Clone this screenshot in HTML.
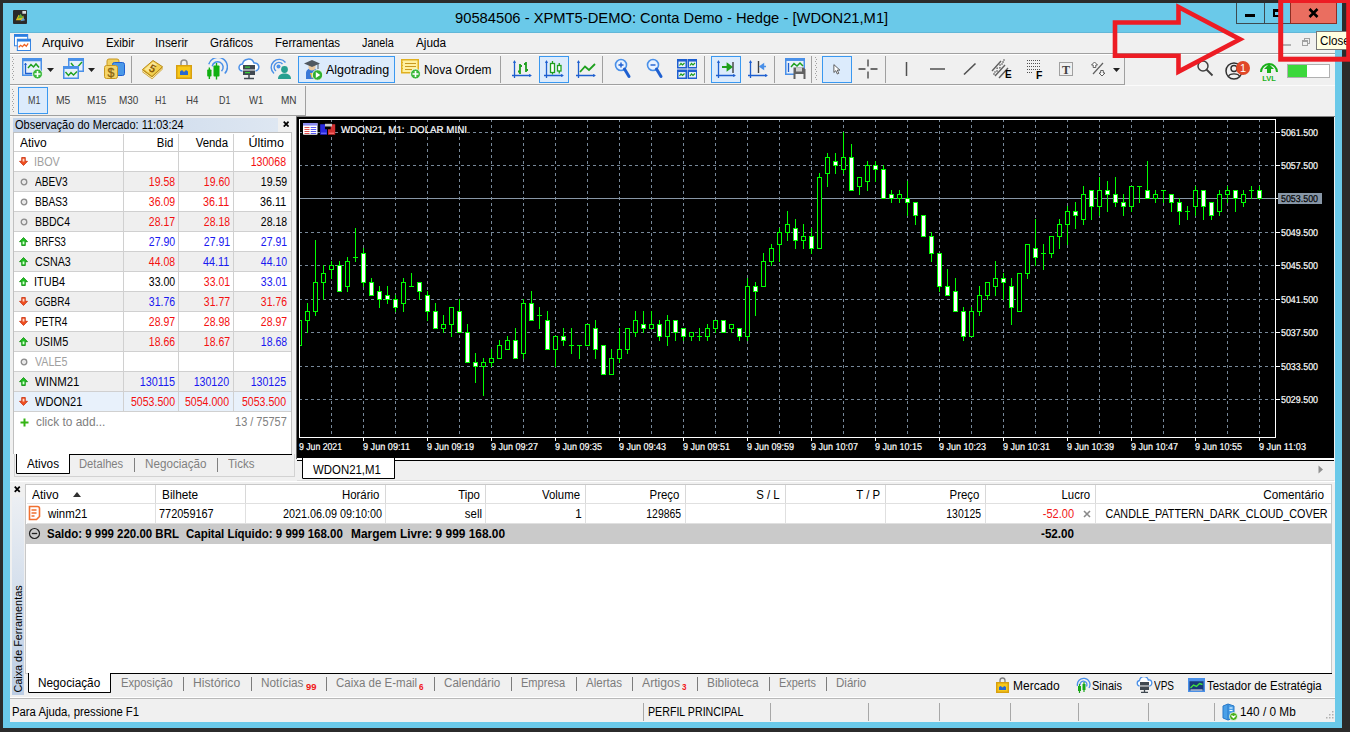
<!DOCTYPE html>
<html lang="pt"><head><meta charset="utf-8"><title>MetaTrader 5</title>
<style>
html,body{margin:0;padding:0}
body{width:1350px;height:732px;overflow:hidden;background:#2b2b2b;position:relative;font-family:"Liberation Sans",Arial,sans-serif;font-size:12px}
#root{position:absolute;left:0;top:0;width:1350px;height:732px;overflow:hidden}
</style></head><body><div id="root">
<div style="position:absolute;left:3px;top:3px;width:1339px;height:725px;background:#6ac9e9;"></div>
<svg width="14" height="14" viewBox="0 0 15 15" style="position:absolute;left:13px;top:10px;"><rect width="15" height="15" rx="1" fill="#2a2a2a"/><path d="M3 11l3-6 3 3 2-2 1 5z" fill="#d8c020"/><path d="M5 9l3-5 3 4z" fill="#58a838"/><path d="M8 12l3-4 2 3z" fill="#5a9ad8"/><rect x="10" y="1" width="4" height="3" fill="#ddd"/></svg>
<span id="t1" style="position:absolute;top:8.0px;line-height:19px;font-size:15px;color:#000;white-space:pre;left:455.00px;transform-origin:0 50%;transform:scaleX(0.9823);">90584506 - XPMT5-DEMO: Conta Demo - Hedge - [WDON21,M1]</span>
<div style="position:absolute;left:1236px;top:3px;width:28.5px;height:21px;border:1px solid #3c4a50;border-top:none;box-sizing:border-box;"></div>
<div style="position:absolute;left:1264px;top:3px;width:27px;height:21px;border:1px solid #3c4a50;border-top:none;border-left:none;box-sizing:border-box;"></div>
<div style="position:absolute;left:1290px;top:3px;width:47px;height:21px;background:#ea6e60;border:1px solid #8c2e24;border-top:none;box-sizing:border-box;"></div>
<div style="position:absolute;left:1245px;top:14px;width:10px;height:3px;background:#000;"></div>
<div style="position:absolute;left:1273px;top:9px;width:9px;height:8px;border:2px solid #000;border-top-width:3px;box-sizing:border-box;"></div>
<svg width="11" height="10" viewBox="0 0 11 10" style="position:absolute;left:1308px;top:8px;"><path d="M1.5 1l8 8M9.5 1l-8 8" stroke="#000" stroke-width="2.6"/></svg>
<div style="position:absolute;left:10px;top:32px;width:1325px;height:1px;background:#62b7d8;"></div>
<div style="position:absolute;left:10px;top:33px;width:1325px;height:689px;background:#f0f0f0;"></div>
<div style="position:absolute;left:10px;top:53px;width:1325px;height:1px;background:#a0a0a0;"></div>
<div style="position:absolute;left:10px;top:54px;width:1325px;height:1px;background:#fff;"></div>
<svg width="17" height="17" viewBox="0 0 18 18" style="position:absolute;left:14px;top:34px;"><rect x="0.5" y="0.5" width="14" height="12" fill="#fff" stroke="#2b7de0"/><rect x="0.5" y="0.5" width="14" height="2.5" fill="#2b7de0"/><rect x="3.5" y="5.5" width="14" height="12" fill="#fff" stroke="#2b7de0"/><rect x="3.5" y="5.5" width="14" height="2.5" fill="#2b7de0"/><path d="M5 14l2-2 2 1.5 2-2.5 2 2 2-3" stroke="#f06020" stroke-width="1.3" fill="none"/></svg>
<span id="t2" style="position:absolute;top:35.0px;line-height:16px;font-size:12px;color:#000;white-space:pre;left:42.00px;transform-origin:0 50%;transform:scaleX(1.0240);">Arquivo</span>
<span id="t3" style="position:absolute;top:35.0px;line-height:16px;font-size:12px;color:#000;white-space:pre;left:106.00px;transform-origin:0 50%;transform:scaleX(0.9497);">Exibir</span>
<span id="t4" style="position:absolute;top:35.0px;line-height:16px;font-size:12px;color:#000;white-space:pre;left:155.01px;transform-origin:0 50%;transform:scaleX(0.9894);">Inserir</span>
<span id="t5" style="position:absolute;top:35.0px;line-height:16px;font-size:12px;color:#000;white-space:pre;left:210.00px;transform-origin:0 50%;transform:scaleX(0.9624);">Gráficos</span>
<span id="t6" style="position:absolute;top:35.0px;line-height:16px;font-size:12px;color:#000;white-space:pre;left:275.00px;transform-origin:0 50%;transform:scaleX(0.9556);">Ferramentas</span>
<span id="t7" style="position:absolute;top:35.0px;line-height:16px;font-size:12px;color:#000;white-space:pre;left:362.00px;transform-origin:0 50%;transform:scaleX(0.8967);">Janela</span>
<span id="t8" style="position:absolute;top:35.0px;line-height:16px;font-size:12px;color:#000;white-space:pre;left:416.00px;transform-origin:0 50%;transform:scaleX(0.9833);">Ajuda</span>
<div style="position:absolute;left:1283px;top:43.7px;width:8px;height:2px;background:#b0b0b0;"></div>
<svg width="10" height="10" viewBox="0 0 10 10" style="position:absolute;left:1301px;top:37px;"><rect x="3.5" y="1.5" width="5" height="5" fill="none" stroke="#a0a0a0"/><rect x="1.5" y="3.5" width="5" height="5" fill="#f0f0f0" stroke="#a0a0a0"/><rect x="1.5" y="3.5" width="5" height="1.5" fill="#a0a0a0"/></svg>
<div style="position:absolute;left:10px;top:84px;width:1115px;height:1px;background:#a0a0a0;"></div>
<div style="position:absolute;left:10px;top:85px;width:1325px;height:1px;background:#fbfbfb;"></div>
<div style="position:absolute;left:1124px;top:54px;width:1px;height:31px;background:#a0a0a0;"></div>
<div style="position:absolute;left:10px;top:115px;width:296px;height:1px;background:#a0a0a0;"></div>
<div style="position:absolute;left:10px;top:116px;width:2px;height:1px;background:#fff;"></div>
<div style="position:absolute;left:305px;top:86px;width:1px;height:30px;background:#a0a0a0;"></div>
<svg width="3" height="24" viewBox="0 0 3 24" style="position:absolute;left:12px;top:57px;"><rect x="0" y="0" width="1" height="1" fill="#a0a0a0"/><rect x="1" y="2" width="1" height="1" fill="#a0a0a0"/><rect x="0" y="4" width="1" height="1" fill="#a0a0a0"/><rect x="1" y="6" width="1" height="1" fill="#a0a0a0"/><rect x="0" y="8" width="1" height="1" fill="#a0a0a0"/><rect x="1" y="10" width="1" height="1" fill="#a0a0a0"/><rect x="0" y="12" width="1" height="1" fill="#a0a0a0"/><rect x="1" y="14" width="1" height="1" fill="#a0a0a0"/><rect x="0" y="16" width="1" height="1" fill="#a0a0a0"/><rect x="1" y="18" width="1" height="1" fill="#a0a0a0"/><rect x="0" y="20" width="1" height="1" fill="#a0a0a0"/><rect x="1" y="22" width="1" height="1" fill="#a0a0a0"/></svg>
<svg width="3" height="24" viewBox="0 0 3 24" style="position:absolute;left:12px;top:89px;"><rect x="0" y="0" width="1" height="1" fill="#a0a0a0"/><rect x="1" y="2" width="1" height="1" fill="#a0a0a0"/><rect x="0" y="4" width="1" height="1" fill="#a0a0a0"/><rect x="1" y="6" width="1" height="1" fill="#a0a0a0"/><rect x="0" y="8" width="1" height="1" fill="#a0a0a0"/><rect x="1" y="10" width="1" height="1" fill="#a0a0a0"/><rect x="0" y="12" width="1" height="1" fill="#a0a0a0"/><rect x="1" y="14" width="1" height="1" fill="#a0a0a0"/><rect x="0" y="16" width="1" height="1" fill="#a0a0a0"/><rect x="1" y="18" width="1" height="1" fill="#a0a0a0"/><rect x="0" y="20" width="1" height="1" fill="#a0a0a0"/><rect x="1" y="22" width="1" height="1" fill="#a0a0a0"/></svg>
<svg width="3" height="24" viewBox="0 0 3 24" style="position:absolute;left:815px;top:57px;"><rect x="0" y="0" width="1" height="1" fill="#a0a0a0"/><rect x="1" y="2" width="1" height="1" fill="#a0a0a0"/><rect x="0" y="4" width="1" height="1" fill="#a0a0a0"/><rect x="1" y="6" width="1" height="1" fill="#a0a0a0"/><rect x="0" y="8" width="1" height="1" fill="#a0a0a0"/><rect x="1" y="10" width="1" height="1" fill="#a0a0a0"/><rect x="0" y="12" width="1" height="1" fill="#a0a0a0"/><rect x="1" y="14" width="1" height="1" fill="#a0a0a0"/><rect x="0" y="16" width="1" height="1" fill="#a0a0a0"/><rect x="1" y="18" width="1" height="1" fill="#a0a0a0"/><rect x="0" y="20" width="1" height="1" fill="#a0a0a0"/><rect x="1" y="22" width="1" height="1" fill="#a0a0a0"/></svg>
<div style="position:absolute;left:298px;top:56px;width:97px;height:27px;background:#dcebfc;border:1px solid #3a98f0;box-sizing:border-box;"></div>
<div style="position:absolute;left:539px;top:56px;width:30px;height:27px;background:#dcebfc;border:1px solid #3a98f0;box-sizing:border-box;"></div>
<div style="position:absolute;left:711px;top:56px;width:30px;height:27px;background:#dcebfc;border:1px solid #3a98f0;box-sizing:border-box;"></div>
<div style="position:absolute;left:822px;top:56px;width:30px;height:27px;background:#dcebfc;border:1px solid #3a98f0;box-sizing:border-box;"></div>
<div style="position:absolute;left:18.4px;top:87.3px;width:29.5px;height:26.6px;background:#dcebfc;border:1px solid #3a98f0;box-sizing:border-box;"></div>
<div style="position:absolute;left:131px;top:56px;width:1px;height:27px;background:#a0a0a0;"></div>
<div style="position:absolute;left:500px;top:56px;width:1px;height:27px;background:#a0a0a0;"></div>
<div style="position:absolute;left:602px;top:56px;width:1px;height:27px;background:#a0a0a0;"></div>
<div style="position:absolute;left:704px;top:56px;width:1px;height:27px;background:#a0a0a0;"></div>
<div style="position:absolute;left:774px;top:56px;width:1px;height:27px;background:#a0a0a0;"></div>
<div style="position:absolute;left:811px;top:56px;width:1px;height:27px;background:#a0a0a0;"></div>
<div style="position:absolute;left:885px;top:56px;width:1px;height:27px;background:#a0a0a0;"></div>
<svg width="22" height="22" viewBox="0 0 22 22" style="position:absolute;left:22px;top:58px;"><rect x="0.75" y="0.75" width="18.5" height="16.5" fill="#e8f0fa" stroke="#4a90e8" stroke-width="1.5"/><rect x="0.75" y="0.75" width="18.5" height="2.5" fill="#4a90e8"/><path d="M3.5 5v10.5h9" stroke="#1e5fd0" stroke-width="1.3" fill="none"/><path d="M2 7l1.5-2 1.5 2z" fill="#1e5fd0"/><path d="M6 10l3-3.5 2.5 2.5 2.5-3 3 3.5" stroke="#1ea01e" stroke-width="1.5" fill="none"/><circle cx="15.5" cy="16" r="5" fill="#3cb83c" stroke="#fff" stroke-width="0.8"/><path d="M15.5 13v6M12.5 16h6" stroke="#fff" stroke-width="1.6"/></svg>
<svg width="22" height="22" viewBox="0 0 22 22" style="position:absolute;left:63px;top:58px;"><rect x="5.75" y="0.75" width="14.5" height="12.5" fill="#e8f0fa" stroke="#4a90e8" stroke-width="1.5"/><rect x="5.75" y="0.75" width="14.5" height="2.2" fill="#4a90e8"/><path d="M8 5l4 5 3.5-2 3.5-4" stroke="#1ea01e" stroke-width="1.4" fill="none"/><rect x="0.75" y="8.75" width="14.5" height="11.5" fill="#e8f0fa" stroke="#4a90e8" stroke-width="1.5"/><rect x="0.75" y="8.75" width="14.5" height="2.2" fill="#4a90e8"/><path d="M2.5 14l3 3.5 2.5-3 2.5 2.5 3.5-3.5" stroke="#1ea01e" stroke-width="1.4" fill="none"/></svg>
<svg width="22" height="22" viewBox="0 0 22 22" style="position:absolute;left:104px;top:58px;"><rect x="3" y="1" width="12" height="12" rx="2" fill="#f0d060" stroke="#c89820"/><rect x="8.5" y="4.5" width="12" height="13" rx="2" fill="#4a98e8" stroke="#1e5fd0"/><rect x="0.5" y="7.5" width="13" height="13" rx="2" fill="#f4d468" stroke="#c89820"/><text x="7" y="18.800" font-family="Liberation Sans,Arial,sans-serif" font-size="12.5" text-anchor="middle" fill="#8a6410" stroke="#8a6410" stroke-width="0.3">$</text></svg>
<svg width="22" height="22" viewBox="0 0 22 22" style="position:absolute;left:141px;top:58px;"><path d="M1.500 11.500v2.800l9.500 7 10.500-9.800v-2.800z" fill="#c89a20"/><path d="M2 13.300l9 6.700 10-9.300" fill="none" stroke="#fff4c0" stroke-width="0.9"/><path d="M1.500 11.500L12 2.500l9.500 6.200L11 18.500z" fill="#f2cf50" stroke="#b88a18" stroke-width="1"/><path d="M3.500 11.300L12 4l4 2.600L7.500 14.300z" fill="#fbe898"/><text x="11.500" y="14.500" font-family="Liberation Sans,Arial,sans-serif" font-size="11" font-weight="bold" text-anchor="middle" fill="#8a5a08" transform="rotate(28 11.500 10.500)">5</text></svg>
<svg width="16" height="20" viewBox="0 0 16 20" style="position:absolute;left:176px;top:59px;"><path d="M5 7v-3a3 3 0 0 1 6 0v3" fill="none" stroke="#909090" stroke-width="1.5"/><rect x="0.75" y="6.75" width="14.5" height="12.5" fill="#f8c818" stroke="#d8a010" stroke-width="1.5"/><path d="M4 16v-3.5l2-1.5 2 2 2-2 2 1.5v3.5z" fill="#2868d0"/></svg>
<svg width="22" height="22" viewBox="0 0 22 22" style="position:absolute;left:206px;top:58px;"><path d="M6.240 8.250A5.500 5.500 0 1 1 15.500 13.150" fill="none" stroke="#4a90e8" stroke-width="1.5"/><path d="M2.770 6.250A9.500 9.500 0 1 1 18.780 15.450" fill="none" stroke="#4a90e8" stroke-width="1.5"/><rect x="1.200" y="11.500" width="4.300" height="7" rx="0.8" fill="#10b010"/><path d="M3.350 9.500v11.500" stroke="#10b010" stroke-width="1.4"/><rect x="7.500" y="7.500" width="6" height="11" rx="0.8" fill="#10b010"/><path d="M10.500 5v16.500" stroke="#10b010" stroke-width="1.4"/></svg>
<svg width="22" height="22" viewBox="0 0 22 22" style="position:absolute;left:238px;top:58px;"><path d="M4.5 13a3.5 3.5 0 0 1 0-7 6 6 0 0 1 11.5-1 4 4 0 0 1 1.500 8" fill="#fff" stroke="#4a90e8" stroke-width="1.5"/><rect x="5" y="7" width="12" height="4.5" fill="#404850"/><rect x="5" y="12.5" width="12" height="4.5" fill="#404850"/><path d="M7 9.2h5M7 14.700h5" stroke="#38d038" stroke-width="1.2"/><path d="M11 17v3M6 20.500h10" stroke="#404850" stroke-width="1.5"/></svg>
<svg width="22" height="22" viewBox="0 0 22 22" style="position:absolute;left:270px;top:58px;"><circle cx="8.500" cy="8.500" r="2" fill="#4a90e8"/><path d="M12.500 6a4.800 4.800 0 1 0 -6.500 7" fill="none" stroke="#4a90e8" stroke-width="1.4"/><path d="M15.500 4.500a8 8 0 1 0 -11.500 11" fill="none" stroke="#4a90e8" stroke-width="1.4"/><circle cx="14.500" cy="11.500" r="3.400" fill="#28a090"/><path d="M8 21c0-4 3-5.500 6.500-5.500s6.500 1.500 6.500 5.500z" fill="#28a090"/></svg>
<svg width="22" height="22" viewBox="0 0 22 22" style="position:absolute;left:302px;top:59px;"><path d="M4 14c0-3 3-5 6-5s6 2 6 5v6h-12z" fill="#3878d8"/><circle cx="10" cy="8" r="3.5" fill="#e8c8a0"/><path d="M2 4.5l8-3.500 8 3.500-8 3.500z" fill="#505860"/><path d="M16 5v5" stroke="#505860"/><path d="M8 14l2 6 2-6z" fill="#e8c040"/><circle cx="15.5" cy="16" r="5.2" fill="#30b030" stroke="#fff" stroke-width="0.8"/><path d="M13.800 13l4.500 3-4.500 3z" fill="#fff"/></svg>
<svg width="22" height="22" viewBox="0 0 22 22" style="position:absolute;left:400px;top:58px;"><rect x="1.750" y="1.750" width="16.500" height="13" fill="#fff0a0" stroke="#e0b020" stroke-width="1.5"/><path d="M1 4.5h2M1 7.500h2M1 10.500h2" stroke="#e0b020"/><path d="M5 5.500h11M5 8.500h11M5 11.500h7" stroke="#c89820" stroke-width="1.2"/><circle cx="15.500" cy="16" r="5" fill="#3cb83c" stroke="#fff" stroke-width="0.8"/><path d="M15.500 13v6M12.500 16h6" stroke="#fff" stroke-width="1.6"/></svg>
<svg width="22" height="21" viewBox="0 0 22 21" style="position:absolute;left:511px;top:59px;"><path d="M3.500 2v17M1 16.500h19" stroke="#1e5fd0" stroke-width="1.3" fill="none"/><path d="M2 4l1.500-3 1.500 3zM18 15l3 1.500-3 1.500z" fill="#1e5fd0"/><path d="M9 5v10M7 12.500h2M9 7h2M15 3v10M13 5h2M15 11h2" stroke="#1ea01e" stroke-width="1.8" fill="none"/></svg>
<svg width="22" height="21" viewBox="0 0 22 21" style="position:absolute;left:543px;top:59px;"><path d="M3.500 2v17M1 16.500h19" stroke="#1e5fd0" stroke-width="1.3" fill="none"/><path d="M2 4l1.500-3 1.500 3zM18 15l3 1.500-3 1.500z" fill="#1e5fd0"/><rect x="7.500" y="4.500" width="4" height="9" fill="#fff" stroke="#1ea01e" stroke-width="1.3"/><path d="M9.500 2v2.500M9.500 13.500v2" stroke="#1ea01e" stroke-width="1.300"/><rect x="14.500" y="6.500" width="3.500" height="5.500" fill="#fff" stroke="#1ea01e" stroke-width="1.3"/><path d="M16.250 4v2.500M16.250 12v2.500" stroke="#1ea01e" stroke-width="1.3"/></svg>
<svg width="22" height="21" viewBox="0 0 22 21" style="position:absolute;left:575px;top:59px;"><path d="M3.500 2v17M1 16.500h19" stroke="#1e5fd0" stroke-width="1.3" fill="none"/><path d="M2 4l1.500-3 1.500 3zM18 15l3 1.500-3 1.500z" fill="#1e5fd0"/><path d="M5 13l5-5.500 4 3.500 6-6" stroke="#1ea01e" stroke-width="1.8" fill="none"/></svg>
<svg width="18" height="22" viewBox="0 0 18 22" style="position:absolute;left:614px;top:58px;"><circle cx="7" cy="7" r="5.500" fill="#e8f2ff" stroke="#4a90e8" stroke-width="1.6"/><path d="M4.500 7h5M7 4.500v5" stroke="#1e5fd0" stroke-width="1.4"/><path d="M10.500 11l4.500 7.500" stroke="#1e5fd0" stroke-width="3" stroke-linecap="round"/></svg>
<svg width="18" height="22" viewBox="0 0 18 22" style="position:absolute;left:646px;top:58px;"><circle cx="7" cy="7" r="5.500" fill="#e8f2ff" stroke="#4a90e8" stroke-width="1.6"/><path d="M4.500 7h5" stroke="#1e5fd0" stroke-width="1.4"/><path d="M10.500 11l4.500 7.500" stroke="#1e5fd0" stroke-width="3" stroke-linecap="round"/></svg>
<svg width="20" height="20" viewBox="0 0 20 20" style="position:absolute;left:677px;top:59px;"><rect x="0.75" y="0.75" width="8.500" height="8" fill="#e8f0fa" stroke="#1e5fd0" stroke-width="1.5"/><rect x="0.75" y="0.75" width="8.500" height="1.800" fill="#1e5fd0"/><path d="M2.5 6.5l1.500-2 1.500 1.500 2-2" stroke="#1ea01e" stroke-width="1.2" fill="none"/><rect x="11.25" y="0.75" width="8.500" height="8" fill="#e8f0fa" stroke="#1e5fd0" stroke-width="1.5"/><rect x="11.25" y="0.75" width="8.500" height="1.800" fill="#1e5fd0"/><path d="M13.0 6.5l1.500-2 1.500 1.500 2-2" stroke="#1ea01e" stroke-width="1.2" fill="none"/><rect x="0.75" y="11.25" width="8.500" height="8" fill="#e8f0fa" stroke="#1e5fd0" stroke-width="1.5"/><rect x="0.75" y="11.25" width="8.500" height="1.800" fill="#1e5fd0"/><path d="M2.5 17.0l1.500-2 1.500 1.500 2-2" stroke="#1ea01e" stroke-width="1.2" fill="none"/><rect x="11.25" y="11.25" width="8.500" height="8" fill="#e8f0fa" stroke="#1e5fd0" stroke-width="1.5"/><rect x="11.25" y="11.25" width="8.500" height="1.800" fill="#1e5fd0"/><path d="M13.0 17.0l1.500-2 1.500 1.500 2-2" stroke="#1ea01e" stroke-width="1.2" fill="none"/></svg>
<svg width="22" height="21" viewBox="0 0 22 21" style="position:absolute;left:715px;top:59px;"><path d="M3.500 2v17M1 16.500h19" stroke="#1e5fd0" stroke-width="1.3" fill="none"/><path d="M2 4l1.500-3 1.500 3zM18 15l3 1.500-3 1.500z" fill="#1e5fd0"/><path d="M7 8h8M12.500 5l4 3-4 3z" stroke="#1ea01e" stroke-width="1.8" fill="#1ea01e"/><path d="M18 3v11" stroke="#404040" stroke-width="1.4"/></svg>
<svg width="22" height="21" viewBox="0 0 22 21" style="position:absolute;left:747px;top:59px;"><path d="M3.500 2v17M1 16.500h19" stroke="#1e5fd0" stroke-width="1.3" fill="none"/><path d="M2 4l1.500-3 1.500 3zM18 15l3 1.500-3 1.500z" fill="#1e5fd0"/><path d="M11.500 2v12" stroke="#404040" stroke-width="1.4"/><path d="M19 7.500h-4M16.500 5l-3.500 2.500 3.500 2.500z" stroke="#4a90e8" stroke-width="1.4" fill="#4a90e8"/></svg>
<svg width="22" height="22" viewBox="0 0 22 22" style="position:absolute;left:785px;top:58px;"><rect x="0.75" y="0.75" width="18.500" height="15.500" fill="#e8f0fa" stroke="#4a90e8" stroke-width="1.5"/><rect x="0.75" y="0.75" width="18.500" height="2.2" fill="#4a90e8"/><path d="M3.500 5v9" stroke="#1e5fd0" stroke-width="1.3"/><path d="M6 9l3-3.500 3 2.500 3-3 3 3" stroke="#1ea01e" stroke-width="1.500" fill="none"/><path d="M8.500 9.500h10l2 2v9.500h-12z" fill="#606060"/><rect x="11" y="9.500" width="6" height="4" fill="#d0d0d0"/><rect x="10.500" y="16" width="8" height="5" fill="#f0f0f0"/></svg>
<svg width="9" height="13" viewBox="0 0 12 16" style="position:absolute;left:832px;top:63px;"><path d="M2.500 1.500v10.500l2.600-2.400 2 4.400 1.900-.9-2-4.300h3.500z" fill="#fff" stroke="#404040" stroke-width="1.1"/></svg>
<svg width="20" height="20" viewBox="0 0 20 20" style="position:absolute;left:858px;top:59px;"><path d="M10 0.500v7M10 12.500v7M0.500 10h7M12.500 10h7" stroke="#404040" stroke-width="1.3"/></svg>
<svg width="3" height="14" viewBox="0 0 3 14" style="position:absolute;left:905px;top:62px;"><path d="M1.500 0v14" stroke="#505050" stroke-width="1.500"/></svg>
<svg width="16" height="4" viewBox="0 0 16 4" style="position:absolute;left:930px;top:67px;"><path d="M0 2h15" stroke="#505050" stroke-width="1.500"/></svg>
<svg width="14" height="14" viewBox="0 0 14 14" style="position:absolute;left:963px;top:62px;"><path d="M1 12.500L12.500 1.500" stroke="#505050" stroke-width="1.600"/></svg>
<svg width="22" height="22" viewBox="0 0 22 22" style="position:absolute;left:991px;top:58px;"><path d="M1 13l9-10M4 18l10-11M8 20l9-10" stroke="#606060" stroke-width="1.4"/><path d="M3 17v-3h3v-4h3v-4h3v-4h3" stroke="#606060" stroke-width="1.1" fill="none" stroke-dasharray="2 1"/><text x="14" y="20" font-family="Liberation Sans,Arial,sans-serif" font-size="10" font-weight="bold" fill="#000">E</text></svg>
<svg width="20" height="22" viewBox="0 0 20 22" style="position:absolute;left:1026px;top:59px;"><rect x="1" y="1" width="1" height="1" fill="#505050"/><rect x="1" y="4" width="1" height="1" fill="#505050"/><rect x="1" y="7" width="1" height="1" fill="#505050"/><rect x="1" y="10" width="1" height="1" fill="#505050"/><rect x="1" y="13" width="1" height="1" fill="#505050"/><rect x="3" y="1" width="1" height="1" fill="#505050"/><rect x="3" y="4" width="1" height="1" fill="#505050"/><rect x="3" y="7" width="1" height="1" fill="#505050"/><rect x="3" y="10" width="1" height="1" fill="#505050"/><rect x="3" y="13" width="1" height="1" fill="#505050"/><rect x="5" y="1" width="1" height="1" fill="#505050"/><rect x="5" y="4" width="1" height="1" fill="#505050"/><rect x="5" y="7" width="1" height="1" fill="#505050"/><rect x="5" y="10" width="1" height="1" fill="#505050"/><rect x="5" y="13" width="1" height="1" fill="#505050"/><rect x="7" y="1" width="1" height="1" fill="#505050"/><rect x="7" y="4" width="1" height="1" fill="#505050"/><rect x="7" y="7" width="1" height="1" fill="#505050"/><rect x="7" y="10" width="1" height="1" fill="#505050"/><rect x="9" y="1" width="1" height="1" fill="#505050"/><rect x="9" y="4" width="1" height="1" fill="#505050"/><rect x="9" y="7" width="1" height="1" fill="#505050"/><rect x="9" y="10" width="1" height="1" fill="#505050"/><rect x="11" y="1" width="1" height="1" fill="#505050"/><rect x="11" y="4" width="1" height="1" fill="#505050"/><rect x="11" y="7" width="1" height="1" fill="#505050"/><rect x="11" y="10" width="1" height="1" fill="#505050"/><rect x="13" y="1" width="1" height="1" fill="#505050"/><rect x="13" y="4" width="1" height="1" fill="#505050"/><rect x="13" y="7" width="1" height="1" fill="#505050"/><rect x="13" y="10" width="1" height="1" fill="#505050"/><text x="10" y="20" font-family="Liberation Sans,Arial,sans-serif" font-size="10.500" font-weight="bold" fill="#000">F</text></svg>
<svg width="17" height="17" viewBox="0 0 17 17" style="position:absolute;left:1058px;top:60px;"><rect x="1.500" y="2.500" width="13" height="13" fill="none" stroke="#505050" stroke-dasharray="1 1"/><text x="8" y="13.500" font-family="Liberation Serif,serif" font-size="12" font-weight="bold" text-anchor="middle" fill="#404040">T</text></svg>
<svg width="17" height="16" viewBox="0 0 17 16" style="position:absolute;left:1090px;top:61px;"><path d="M3 13L13 2" stroke="#606060" stroke-width="1.200"/><path d="M4.500 1l3 3h-1.700v2.500h-2.600v-2.500h-1.700z" fill="#fff" stroke="#505050" stroke-width="0.9"/><path d="M12 15l3-3h-1.700v-2.500h-2.600v2.500h-1.700z" fill="#fff" stroke="#505050" stroke-width="0.9"/></svg>
<svg width="18" height="18" viewBox="0 0 18 18" style="position:absolute;left:1196px;top:59px;"><circle cx="7" cy="7" r="5" fill="none" stroke="#404040" stroke-width="1.500"/><path d="M10.500 10.500l6 6" stroke="#404040" stroke-width="1.800"/></svg>
<svg width="28" height="24" viewBox="0 0 28 24" style="position:absolute;left:1224px;top:58px;"><circle cx="10" cy="13" r="8" fill="none" stroke="#303030" stroke-width="1.500"/><circle cx="10" cy="10.500" r="3" fill="none" stroke="#303030" stroke-width="1.4"/><path d="M4.500 18.500c1-3.500 10-3.500 11 0" fill="none" stroke="#303030" stroke-width="1.4"/><circle cx="19" cy="10" r="7" fill="#e04828"/><text x="19" y="14" font-family="Liberation Sans,Arial,sans-serif" font-size="11" text-anchor="middle" fill="#fff">1</text></svg>
<svg width="24" height="24" viewBox="0 0 24 24" style="position:absolute;left:1257px;top:59px;"><path d="M4 13a8 8 0 1 1 16 0" fill="none" stroke="#18b018" stroke-width="2"/><path d="M12 5l5 5h-3v4h-4v-4h-3z" fill="#18b018"/><text x="12" y="21.500" font-family="Liberation Sans,Arial,sans-serif" font-size="7.500" font-weight="bold" text-anchor="middle" fill="#18b018">LVL</text></svg>
<svg width="43" height="14" viewBox="0 0 43 14" style="position:absolute;left:1287px;top:64px;"><rect x="0.500" y="0.500" width="42" height="13" fill="#fff" stroke="#b0b0b0"/><rect x="1" y="1" width="19" height="12" fill="#3cd83c"/></svg>
<svg width="7" height="4" viewBox="0 0 7 4" style="position:absolute;left:47px;top:68px;"><path d="M0 0h7l-3.5 4z" fill="#222"/></svg>
<svg width="7" height="4" viewBox="0 0 7 4" style="position:absolute;left:88px;top:68px;"><path d="M0 0h7l-3.5 4z" fill="#222"/></svg>
<svg width="7" height="4" viewBox="0 0 7 4" style="position:absolute;left:1113px;top:68px;"><path d="M0 0h7l-3.5 4z" fill="#222"/></svg>
<span id="t9" style="position:absolute;top:62.0px;line-height:16px;font-size:12px;color:#000;white-space:pre;left:326.00px;transform-origin:0 50%;transform:scaleX(1.0411);">Algotrading</span>
<span id="t10" style="position:absolute;top:62.0px;line-height:16px;font-size:12px;color:#000;white-space:pre;left:424.00px;transform-origin:0 50%;transform:scaleX(0.9923);">Nova Ordem</span>
<span id="t11" style="position:absolute;top:93.2px;line-height:14.5px;font-size:10.5px;color:#3c3c3c;white-space:pre;left:28.00px;transform-origin:0 50%;transform:scaleX(0.8477);">M1</span>
<span id="t12" style="position:absolute;top:93.2px;line-height:14.5px;font-size:10.5px;color:#3c3c3c;white-space:pre;left:56.00px;transform-origin:0 50%;transform:scaleX(0.9833);">M5</span>
<span id="t13" style="position:absolute;top:93.2px;line-height:14.5px;font-size:10.5px;color:#3c3c3c;white-space:pre;left:86.50px;transform-origin:0 50%;transform:scaleX(0.9472);">M15</span>
<span id="t14" style="position:absolute;top:93.2px;line-height:14.5px;font-size:10.5px;color:#3c3c3c;white-space:pre;left:118.50px;transform-origin:0 50%;transform:scaleX(0.9472);">M30</span>
<span id="t15" style="position:absolute;top:93.2px;line-height:14.5px;font-size:10.5px;color:#3c3c3c;white-space:pre;left:154.50px;transform-origin:0 50%;transform:scaleX(0.8467);">H1</span>
<span id="t16" style="position:absolute;top:93.2px;line-height:14.5px;font-size:10.5px;color:#3c3c3c;white-space:pre;left:185.50px;transform-origin:0 50%;transform:scaleX(0.9203);">H4</span>
<span id="t17" style="position:absolute;top:93.2px;line-height:14.5px;font-size:10.5px;color:#3c3c3c;white-space:pre;left:218.50px;transform-origin:0 50%;transform:scaleX(0.8467);">D1</span>
<span id="t18" style="position:absolute;top:93.2px;line-height:14.5px;font-size:10.5px;color:#3c3c3c;white-space:pre;left:248.50px;transform-origin:0 50%;transform:scaleX(0.9114);">W1</span>
<span id="t19" style="position:absolute;top:93.2px;line-height:14.5px;font-size:10.5px;color:#3c3c3c;white-space:pre;left:280.50px;transform-origin:0 50%;transform:scaleX(0.9526);">MN</span>
<div style="position:absolute;left:12px;top:116px;width:285px;height:363px;background:#f0f0f0;"></div>
<div style="position:absolute;left:13px;top:118px;width:265px;height:13.5px;background:linear-gradient(90deg,#c3d3e8,#dee7f2);"></div>
<span id="t20" style="position:absolute;top:116.5px;line-height:16px;font-size:12px;color:#000;white-space:pre;left:15.00px;transform-origin:0 50%;transform:scaleX(0.9174);">Observação do Mercado: 11:03:24</span>
<svg width="6.3" height="6.3" viewBox="0 0 7 7" style="position:absolute;left:283px;top:121.2px;"><path d="M0.8 0.8l5.4 5.4M6.2 0.8l-5.4 5.4" stroke="#000" stroke-width="1.9"/></svg>
<div style="position:absolute;left:13px;top:132px;width:279px;height:322px;background:#fff;border:1px solid #c0c0c0;border-bottom:none;box-sizing:border-box;"></div>
<div style="position:absolute;left:14px;top:134px;width:277px;height:17px;background:#fff;"></div>
<div style="position:absolute;left:14px;top:152px;width:277px;height:19px;background:#fff;"></div>
<svg width="9" height="9" viewBox="0 0 9 9" style="position:absolute;left:19px;top:157px;"><path d="M4.5 8.5l4-4.2h-2.2v-3.8h-3.6v3.8h-2.2z" fill="#f05020" stroke="#c83010" stroke-width="0.8"/><rect x="3.6" y="1.7" width="1.8" height="2.8" fill="#ffd8c8"/></svg>
<span id="t21" style="position:absolute;top:153.5px;line-height:16px;font-size:12px;color:#a0a0a0;white-space:pre;left:34.40px;transform-origin:0 50%;transform:scaleX(0.8998);">IBOV</span>
<span id="t22" style="position:absolute;top:153.5px;line-height:16px;font-size:12px;color:#f41010;white-space:pre;right:1063.49px;transform-origin:100% 50%;transform:scaleX(0.8843);">130068</span>
<div style="position:absolute;left:14px;top:172px;width:277px;height:19px;background:#efefef;"></div>
<svg width="8" height="8" viewBox="0 0 8 8" style="position:absolute;left:20px;top:178px;"><circle cx="4" cy="4" r="2.8" fill="#e8e8e8" stroke="#8a8a8a" stroke-width="1.3"/></svg>
<span id="t23" style="position:absolute;top:173.5px;line-height:16px;font-size:12px;color:#000;white-space:pre;left:35.30px;transform-origin:0 50%;transform:scaleX(0.8458);">ABEV3</span>
<span id="t24" style="position:absolute;top:173.5px;line-height:16px;font-size:12px;color:#f41010;white-space:pre;right:1175.08px;transform-origin:100% 50%;transform:scaleX(0.8730);">19.58</span>
<span id="t25" style="position:absolute;top:173.5px;line-height:16px;font-size:12px;color:#f41010;white-space:pre;right:1120.48px;transform-origin:100% 50%;transform:scaleX(0.8730);">19.60</span>
<span id="t26" style="position:absolute;top:173.5px;line-height:16px;font-size:12px;color:#000;white-space:pre;right:1063.48px;transform-origin:100% 50%;transform:scaleX(0.8730);">19.59</span>
<div style="position:absolute;left:14px;top:192px;width:277px;height:19px;background:#fff;"></div>
<svg width="8" height="8" viewBox="0 0 8 8" style="position:absolute;left:20px;top:198px;"><circle cx="4" cy="4" r="2.8" fill="#e8e8e8" stroke="#8a8a8a" stroke-width="1.3"/></svg>
<span id="t27" style="position:absolute;top:193.5px;line-height:16px;font-size:12px;color:#000;white-space:pre;left:35.30px;transform-origin:0 50%;transform:scaleX(0.8458);">BBAS3</span>
<span id="t28" style="position:absolute;top:193.5px;line-height:16px;font-size:12px;color:#f41010;white-space:pre;right:1175.08px;transform-origin:100% 50%;transform:scaleX(0.8730);">36.09</span>
<span id="t29" style="position:absolute;top:193.5px;line-height:16px;font-size:12px;color:#f41010;white-space:pre;right:1120.49px;transform-origin:100% 50%;transform:scaleX(0.8994);">36.11</span>
<span id="t30" style="position:absolute;top:193.5px;line-height:16px;font-size:12px;color:#000;white-space:pre;right:1063.49px;transform-origin:100% 50%;transform:scaleX(0.8994);">36.11</span>
<div style="position:absolute;left:14px;top:212px;width:277px;height:19px;background:#efefef;"></div>
<svg width="8" height="8" viewBox="0 0 8 8" style="position:absolute;left:20px;top:218px;"><circle cx="4" cy="4" r="2.8" fill="#e8e8e8" stroke="#8a8a8a" stroke-width="1.3"/></svg>
<span id="t31" style="position:absolute;top:213.5px;line-height:16px;font-size:12px;color:#000;white-space:pre;left:35.30px;transform-origin:0 50%;transform:scaleX(0.8751);">BBDC4</span>
<span id="t32" style="position:absolute;top:213.5px;line-height:16px;font-size:12px;color:#f41010;white-space:pre;right:1175.08px;transform-origin:100% 50%;transform:scaleX(0.8730);">28.17</span>
<span id="t33" style="position:absolute;top:213.5px;line-height:16px;font-size:12px;color:#f41010;white-space:pre;right:1120.48px;transform-origin:100% 50%;transform:scaleX(0.8730);">28.18</span>
<span id="t34" style="position:absolute;top:213.5px;line-height:16px;font-size:12px;color:#000;white-space:pre;right:1063.48px;transform-origin:100% 50%;transform:scaleX(0.8730);">28.18</span>
<div style="position:absolute;left:14px;top:232px;width:277px;height:19px;background:#fff;"></div>
<svg width="9" height="9" viewBox="0 0 9 9" style="position:absolute;left:19px;top:237px;"><path d="M4.5 0.5l4 4.2h-2.2v3.8h-3.6v-3.8h-2.2z" fill="#22c022" stroke="#0a8a0a" stroke-width="0.8"/><rect x="3.6" y="4.5" width="1.8" height="2.8" fill="#d8ffd8"/></svg>
<span id="t35" style="position:absolute;top:233.5px;line-height:16px;font-size:12px;color:#000;white-space:pre;left:35.30px;transform-origin:0 50%;transform:scaleX(0.7974);">BRFS3</span>
<span id="t36" style="position:absolute;top:233.5px;line-height:16px;font-size:12px;color:#1818f0;white-space:pre;right:1175.08px;transform-origin:100% 50%;transform:scaleX(0.8730);">27.90</span>
<span id="t37" style="position:absolute;top:233.5px;line-height:16px;font-size:12px;color:#1818f0;white-space:pre;right:1120.48px;transform-origin:100% 50%;transform:scaleX(0.8730);">27.91</span>
<span id="t38" style="position:absolute;top:233.5px;line-height:16px;font-size:12px;color:#1818f0;white-space:pre;right:1063.48px;transform-origin:100% 50%;transform:scaleX(0.8730);">27.91</span>
<div style="position:absolute;left:14px;top:252px;width:277px;height:19px;background:#efefef;"></div>
<svg width="9" height="9" viewBox="0 0 9 9" style="position:absolute;left:19px;top:257px;"><path d="M4.5 0.5l4 4.2h-2.2v3.8h-3.6v-3.8h-2.2z" fill="#22c022" stroke="#0a8a0a" stroke-width="0.8"/><rect x="3.6" y="4.5" width="1.8" height="2.8" fill="#d8ffd8"/></svg>
<span id="t39" style="position:absolute;top:253.5px;line-height:16px;font-size:12px;color:#000;white-space:pre;left:35.30px;transform-origin:0 50%;transform:scaleX(0.8949);">CSNA3</span>
<span id="t40" style="position:absolute;top:253.5px;line-height:16px;font-size:12px;color:#f41010;white-space:pre;right:1175.08px;transform-origin:100% 50%;transform:scaleX(0.8730);">44.08</span>
<span id="t41" style="position:absolute;top:253.5px;line-height:16px;font-size:12px;color:#1818f0;white-space:pre;right:1120.49px;transform-origin:100% 50%;transform:scaleX(0.8994);">44.11</span>
<span id="t42" style="position:absolute;top:253.5px;line-height:16px;font-size:12px;color:#1818f0;white-space:pre;right:1063.48px;transform-origin:100% 50%;transform:scaleX(0.8730);">44.10</span>
<div style="position:absolute;left:14px;top:272px;width:277px;height:19px;background:#fff;"></div>
<svg width="9" height="9" viewBox="0 0 9 9" style="position:absolute;left:19px;top:277px;"><path d="M4.5 0.5l4 4.2h-2.2v3.8h-3.6v-3.8h-2.2z" fill="#22c022" stroke="#0a8a0a" stroke-width="0.8"/><rect x="3.6" y="4.5" width="1.8" height="2.8" fill="#d8ffd8"/></svg>
<span id="t43" style="position:absolute;top:273.5px;line-height:16px;font-size:12px;color:#000;white-space:pre;left:34.39px;transform-origin:0 50%;transform:scaleX(0.9120);">ITUB4</span>
<span id="t44" style="position:absolute;top:273.5px;line-height:16px;font-size:12px;color:#000;white-space:pre;right:1175.08px;transform-origin:100% 50%;transform:scaleX(0.8730);">33.00</span>
<span id="t45" style="position:absolute;top:273.5px;line-height:16px;font-size:12px;color:#f41010;white-space:pre;right:1120.48px;transform-origin:100% 50%;transform:scaleX(0.8730);">33.01</span>
<span id="t46" style="position:absolute;top:273.5px;line-height:16px;font-size:12px;color:#1818f0;white-space:pre;right:1063.48px;transform-origin:100% 50%;transform:scaleX(0.8730);">33.01</span>
<div style="position:absolute;left:14px;top:292px;width:277px;height:19px;background:#efefef;"></div>
<svg width="9" height="9" viewBox="0 0 9 9" style="position:absolute;left:19px;top:297px;"><path d="M4.5 8.5l4-4.2h-2.2v-3.8h-3.6v3.8h-2.2z" fill="#f05020" stroke="#c83010" stroke-width="0.8"/><rect x="3.6" y="1.7" width="1.8" height="2.8" fill="#ffd8c8"/></svg>
<span id="t47" style="position:absolute;top:293.5px;line-height:16px;font-size:12px;color:#000;white-space:pre;left:35.30px;transform-origin:0 50%;transform:scaleX(0.8338);">GGBR4</span>
<span id="t48" style="position:absolute;top:293.5px;line-height:16px;font-size:12px;color:#1818f0;white-space:pre;right:1175.08px;transform-origin:100% 50%;transform:scaleX(0.8730);">31.76</span>
<span id="t49" style="position:absolute;top:293.5px;line-height:16px;font-size:12px;color:#f41010;white-space:pre;right:1120.48px;transform-origin:100% 50%;transform:scaleX(0.8730);">31.77</span>
<span id="t50" style="position:absolute;top:293.5px;line-height:16px;font-size:12px;color:#f41010;white-space:pre;right:1063.48px;transform-origin:100% 50%;transform:scaleX(0.8730);">31.76</span>
<div style="position:absolute;left:14px;top:312px;width:277px;height:19px;background:#fff;"></div>
<svg width="9" height="9" viewBox="0 0 9 9" style="position:absolute;left:19px;top:317px;"><path d="M4.5 8.5l4-4.2h-2.2v-3.8h-3.6v3.8h-2.2z" fill="#f05020" stroke="#c83010" stroke-width="0.8"/><rect x="3.6" y="1.7" width="1.8" height="2.8" fill="#ffd8c8"/></svg>
<span id="t51" style="position:absolute;top:313.5px;line-height:16px;font-size:12px;color:#000;white-space:pre;left:35.30px;transform-origin:0 50%;transform:scaleX(0.8384);">PETR4</span>
<span id="t52" style="position:absolute;top:313.5px;line-height:16px;font-size:12px;color:#f41010;white-space:pre;right:1175.08px;transform-origin:100% 50%;transform:scaleX(0.8730);">28.97</span>
<span id="t53" style="position:absolute;top:313.5px;line-height:16px;font-size:12px;color:#f41010;white-space:pre;right:1120.48px;transform-origin:100% 50%;transform:scaleX(0.8730);">28.98</span>
<span id="t54" style="position:absolute;top:313.5px;line-height:16px;font-size:12px;color:#f41010;white-space:pre;right:1063.48px;transform-origin:100% 50%;transform:scaleX(0.8730);">28.97</span>
<div style="position:absolute;left:14px;top:332px;width:277px;height:19px;background:#efefef;"></div>
<svg width="9" height="9" viewBox="0 0 9 9" style="position:absolute;left:19px;top:337px;"><path d="M4.5 0.5l4 4.2h-2.2v3.8h-3.6v-3.8h-2.2z" fill="#22c022" stroke="#0a8a0a" stroke-width="0.8"/><rect x="3.6" y="4.5" width="1.8" height="2.8" fill="#d8ffd8"/></svg>
<span id="t55" style="position:absolute;top:333.5px;line-height:16px;font-size:12px;color:#000;white-space:pre;left:35.30px;transform-origin:0 50%;transform:scaleX(0.9054);">USIM5</span>
<span id="t56" style="position:absolute;top:333.5px;line-height:16px;font-size:12px;color:#f41010;white-space:pre;right:1175.08px;transform-origin:100% 50%;transform:scaleX(0.8730);">18.66</span>
<span id="t57" style="position:absolute;top:333.5px;line-height:16px;font-size:12px;color:#f41010;white-space:pre;right:1120.48px;transform-origin:100% 50%;transform:scaleX(0.8730);">18.67</span>
<span id="t58" style="position:absolute;top:333.5px;line-height:16px;font-size:12px;color:#1818f0;white-space:pre;right:1063.48px;transform-origin:100% 50%;transform:scaleX(0.8730);">18.68</span>
<div style="position:absolute;left:14px;top:352px;width:277px;height:19px;background:#fff;"></div>
<svg width="8" height="8" viewBox="0 0 8 8" style="position:absolute;left:20px;top:358px;"><circle cx="4" cy="4" r="2.8" fill="#e8e8e8" stroke="#8a8a8a" stroke-width="1.3"/></svg>
<span id="t59" style="position:absolute;top:353.5px;line-height:16px;font-size:12px;color:#a0a0a0;white-space:pre;left:35.30px;transform-origin:0 50%;transform:scaleX(0.8887);">VALE5</span>
<div style="position:absolute;left:14px;top:372px;width:277px;height:19px;background:#efefef;"></div>
<svg width="9" height="9" viewBox="0 0 9 9" style="position:absolute;left:19px;top:377px;"><path d="M4.5 0.5l4 4.2h-2.2v3.8h-3.6v-3.8h-2.2z" fill="#22c022" stroke="#0a8a0a" stroke-width="0.8"/><rect x="3.6" y="4.5" width="1.8" height="2.8" fill="#d8ffd8"/></svg>
<span id="t60" style="position:absolute;top:373.5px;line-height:16px;font-size:12px;color:#000;white-space:pre;left:35.30px;transform-origin:0 50%;transform:scaleX(0.9511);">WINM21</span>
<span id="t61" style="position:absolute;top:373.5px;line-height:16px;font-size:12px;color:#1818f0;white-space:pre;right:1175.09px;transform-origin:100% 50%;transform:scaleX(0.9043);">130115</span>
<span id="t62" style="position:absolute;top:373.5px;line-height:16px;font-size:12px;color:#1818f0;white-space:pre;right:1120.49px;transform-origin:100% 50%;transform:scaleX(0.8843);">130120</span>
<span id="t63" style="position:absolute;top:373.5px;line-height:16px;font-size:12px;color:#1818f0;white-space:pre;right:1063.49px;transform-origin:100% 50%;transform:scaleX(0.8843);">130125</span>
<div style="position:absolute;left:14px;top:392px;width:277px;height:19px;background:#e8f1fb;"></div>
<svg width="9" height="9" viewBox="0 0 9 9" style="position:absolute;left:19px;top:397px;"><path d="M4.5 8.5l4-4.2h-2.2v-3.8h-3.6v3.8h-2.2z" fill="#f05020" stroke="#c83010" stroke-width="0.8"/><rect x="3.6" y="1.7" width="1.8" height="2.8" fill="#ffd8c8"/></svg>
<span id="t64" style="position:absolute;top:393.5px;line-height:16px;font-size:12px;color:#000;white-space:pre;left:35.30px;transform-origin:0 50%;transform:scaleX(0.9232);">WDON21</span>
<span id="t65" style="position:absolute;top:393.5px;line-height:16px;font-size:12px;color:#f41010;white-space:pre;right:1175.09px;transform-origin:100% 50%;transform:scaleX(0.8804);">5053.500</span>
<span id="t66" style="position:absolute;top:393.5px;line-height:16px;font-size:12px;color:#f41010;white-space:pre;right:1120.49px;transform-origin:100% 50%;transform:scaleX(0.8804);">5054.000</span>
<span id="t67" style="position:absolute;top:393.5px;line-height:16px;font-size:12px;color:#f41010;white-space:pre;right:1063.49px;transform-origin:100% 50%;transform:scaleX(0.8804);">5053.500</span>
<div style="position:absolute;left:14px;top:151px;width:277px;height:1px;background:#d0d0d0;"></div>
<div style="position:absolute;left:14px;top:171px;width:277px;height:1px;background:#d0d0d0;"></div>
<div style="position:absolute;left:14px;top:191px;width:277px;height:1px;background:#d0d0d0;"></div>
<div style="position:absolute;left:14px;top:211px;width:277px;height:1px;background:#d0d0d0;"></div>
<div style="position:absolute;left:14px;top:231px;width:277px;height:1px;background:#d0d0d0;"></div>
<div style="position:absolute;left:14px;top:251px;width:277px;height:1px;background:#d0d0d0;"></div>
<div style="position:absolute;left:14px;top:271px;width:277px;height:1px;background:#d0d0d0;"></div>
<div style="position:absolute;left:14px;top:291px;width:277px;height:1px;background:#d0d0d0;"></div>
<div style="position:absolute;left:14px;top:311px;width:277px;height:1px;background:#d0d0d0;"></div>
<div style="position:absolute;left:14px;top:331px;width:277px;height:1px;background:#d0d0d0;"></div>
<div style="position:absolute;left:14px;top:351px;width:277px;height:1px;background:#d0d0d0;"></div>
<div style="position:absolute;left:14px;top:371px;width:277px;height:1px;background:#d0d0d0;"></div>
<div style="position:absolute;left:14px;top:391px;width:277px;height:1px;background:#d0d0d0;"></div>
<div style="position:absolute;left:14px;top:411px;width:277px;height:1px;background:#d0d0d0;"></div>
<div style="position:absolute;left:123px;top:134px;width:1px;height:278px;background:#d0d0d0;"></div>
<div style="position:absolute;left:178px;top:134px;width:1px;height:278px;background:#d0d0d0;"></div>
<div style="position:absolute;left:233px;top:134px;width:1px;height:278px;background:#d0d0d0;"></div>
<span id="t68" style="position:absolute;top:135.0px;line-height:16px;font-size:12px;color:#000;white-space:pre;left:20.00px;transform-origin:0 50%;transform:scaleX(0.9999);">Ativo</span>
<span id="t69" style="position:absolute;top:135.0px;line-height:16px;font-size:12px;color:#000;white-space:pre;right:1176.36px;transform-origin:100% 50%;transform:scaleX(0.9500);">Bid</span>
<span id="t70" style="position:absolute;top:135.0px;line-height:16px;font-size:12px;color:#000;white-space:pre;right:1122.31px;transform-origin:100% 50%;transform:scaleX(0.9500);">Venda</span>
<span id="t71" style="position:absolute;top:135.0px;line-height:16px;font-size:12px;color:#000;white-space:pre;right:1065.54px;transform-origin:100% 50%;transform:scaleX(1.0429);">Último</span>
<svg width="9" height="9" viewBox="0 0 9 9" style="position:absolute;left:19.5px;top:417.5px;"><path d="M4.5 0.5v8M0.5 4.5h8" stroke="#34b414" stroke-width="2"/></svg>
<span id="t72" style="position:absolute;top:413.5px;line-height:16px;font-size:12px;color:#808080;white-space:pre;left:35.50px;transform-origin:0 50%;transform:scaleX(0.9914);">click to add...</span>
<span id="t73" style="position:absolute;top:413.5px;line-height:16px;font-size:12px;color:#808080;white-space:pre;right:1063.50px;transform-origin:100% 50%;transform:scaleX(0.9098);">13 / 75757</span>
<div style="position:absolute;left:13.5px;top:454px;width:281px;height:22.5px;border:1px solid #d2d2d2;border-top:none;box-sizing:border-box;"></div>
<div style="position:absolute;left:68px;top:453.5px;width:224px;height:1.4px;background:#000;"></div>
<div style="position:absolute;left:15.5px;top:453.5px;width:54px;height:20.3px;background:#fff;border:1.5px solid #000;border-top:none;box-sizing:border-box;border-radius:0 0 1.5px 1.5px;"></div>
<span id="t74" style="position:absolute;top:455.7px;line-height:16px;font-size:12px;color:#000;white-space:pre;left:26.70px;transform-origin:0 50%;transform:scaleX(0.9793);">Ativos</span>
<span id="t75" style="position:absolute;top:455.7px;line-height:16px;font-size:12px;color:#808080;white-space:pre;left:79.40px;transform-origin:0 50%;transform:scaleX(0.9333);">Detalhes</span>
<div style="position:absolute;left:134px;top:458px;width:1px;height:14px;background:#808080;"></div>
<span id="t76" style="position:absolute;top:455.7px;line-height:16px;font-size:12px;color:#808080;white-space:pre;left:144.60px;transform-origin:0 50%;transform:scaleX(0.9717);">Negociação</span>
<div style="position:absolute;left:217px;top:458px;width:1px;height:14px;background:#808080;"></div>
<span id="t77" style="position:absolute;top:455.7px;line-height:16px;font-size:12px;color:#808080;white-space:pre;left:227.60px;transform-origin:0 50%;transform:scaleX(0.9582);">Ticks</span>
<div style="position:absolute;left:296px;top:116px;width:1039px;height:1px;background:#828282;"></div>
<div style="position:absolute;left:296px;top:117px;width:1px;height:342px;background:#6a6a6a;"></div>
<svg id="chart" width="1037" height="341" viewBox="297 117 1037 341" shape-rendering="crispEdges" style="position:absolute;left:297px;top:117px">
<rect x="297" y="117" width="1037" height="341" fill="#000"/>
<path d="M299 132.5H1275M299 165.5H1275M299 198.5H1275M299 232.5H1275M299 265.5H1275M299 299.5H1275M299 332.5H1275M299 366.5H1275M299 399.5H1275M331.5 119V437M363.5 119V437M395.5 119V437M427.5 119V437M459.5 119V437M491.5 119V437M523.5 119V437M555.5 119V437M587.5 119V437M619.5 119V437M651.5 119V437M683.5 119V437M715.5 119V437M747.5 119V437M779.5 119V437M811.5 119V437M843.5 119V437M875.5 119V437M907.5 119V437M939.5 119V437M971.5 119V437M1003.5 119V437M1035.5 119V437M1067.5 119V437M1099.5 119V437M1131.5 119V437M1163.5 119V437M1195.5 119V437M1227.5 119V437M1259.5 119V437" stroke="#778899" stroke-width="1" stroke-dasharray="3 3" fill="none"/>
<path d="M300 198.5H1276" stroke="#8796a6" stroke-width="1"/>
<clipPath id="cp"><rect x="300" y="120" width="975" height="317"/></clipPath>
<g clip-path="url(#cp)">
<path d="M307.5 303V311M307.5 321V333M315.5 240V282M315.5 312V316M323.5 265V273M323.5 283V300M331.5 261V265M331.5 270V279M339.5 261V265M347.5 257V261M347.5 287V292M355.5 228V262M353 257.5H358M363.5 248V253M363.5 283V287M371.5 278V282M379.5 286V291M379.5 300V308M387.5 286V295M387.5 300V304M395.5 295V299M395.5 308V312M403.5 278V282M403.5 304V312M411.5 273V287M409 286.5H414M419.5 292V300M427.5 291V295M427.5 312V321M435.5 303V311M443.5 315V324M443.5 329V333M451.5 325V337M459.5 299V311M467.5 324V332M475.5 353V362M475.5 367V383M483.5 358V362M483.5 367V396M491.5 349V358M491.5 363V367M499.5 340V345M507.5 336V340M515.5 328V340M523.5 299V303M523.5 354V359M531.5 291V303M539.5 307V329M537 315.5H542M547.5 311V320M555.5 350V367M563.5 328V336M563.5 341V346M571.5 328V354M569 345.5H574M579.5 345V359M577 345.5H582M595.5 320V328M595.5 350V359M611.5 349V358M619.5 328V349M619.5 359V363M627.5 350V354M635.5 311V320M635.5 333V337M643.5 311V324M643.5 329V333M651.5 311V324M659.5 320V324M659.5 337V341M667.5 315V320M667.5 337V346M675.5 333V341M683.5 337V341M691.5 337V341M699.5 328V341M697 336.5H702M707.5 324V328M707.5 337V341M715.5 329V333M731.5 329V333M739.5 337V341M747.5 278V286M747.5 337V341M755.5 282V286M755.5 292V316M763.5 253V261M771.5 244V248M771.5 262V266M779.5 228V232M779.5 245V262M787.5 211V224M787.5 233V241M795.5 219V228M795.5 241V249M803.5 224V236M803.5 241V249M811.5 228V236M811.5 249V254M819.5 173V177M827.5 153V157M827.5 174V187M835.5 153V161M835.5 166V174M843.5 132V157M843.5 170V174M851.5 144V157M859.5 187V195M867.5 161V165M867.5 182V191M875.5 161V165M875.5 170V182M883.5 165V169M891.5 190V194M891.5 199V203M899.5 190V194M899.5 199V203M907.5 181V198M907.5 203V216M915.5 216V225M931.5 232V236M931.5 254V262M939.5 287V292M947.5 269V286M955.5 278V291M963.5 307V311M963.5 337V341M971.5 307V311M979.5 286V295M979.5 312V316M987.5 296V300M995.5 261V278M995.5 287V296M1003.5 273V278M1003.5 283V300M1011.5 278V286M1011.5 308V325M1027.5 274V279M1035.5 219V248M1035.5 258V266M1043.5 244V270M1041 253.5H1046M1051.5 254V258M1059.5 219V224M1059.5 237V249M1067.5 206V211M1067.5 225V245M1075.5 202V211M1075.5 216V229M1083.5 186V194M1083.5 220V225M1091.5 207V220M1099.5 177V190M1099.5 207V216M1107.5 181V190M1107.5 195V212M1115.5 177V194M1115.5 203V207M1123.5 194V202M1123.5 207V216M1131.5 207V212M1139.5 186V203M1137 186.5H1142M1147.5 161V190M1155.5 190V194M1155.5 199V203M1163.5 190V203M1161 190.5H1166M1171.5 203V212M1179.5 198V202M1179.5 212V225M1187.5 206V220M1185 211.5H1190M1195.5 186V190M1195.5 207V216M1203.5 207V220M1211.5 216V220M1219.5 190V194M1219.5 212V216M1227.5 186V190M1227.5 195V203M1235.5 199V212M1243.5 190V194M1243.5 203V207M1251.5 186V199M1249 190.5H1254M1259.5 186V190" stroke="#00ff00" stroke-width="1" fill="none"/>
<path d="M297.5 320.5H301.5V345.5H297.5ZM305.5 311.5H309.5V320.5H305.5ZM313.5 282.5H317.5V311.5H313.5ZM321.5 273.5H325.5V282.5H321.5ZM329.5 265.5H333.5V269.5H329.5ZM345.5 261.5H349.5V286.5H345.5ZM401.5 282.5H405.5V303.5H401.5ZM441.5 324.5H445.5V328.5H441.5ZM449.5 307.5H453.5V324.5H449.5ZM481.5 362.5H485.5V366.5H481.5ZM489.5 358.5H493.5V362.5H489.5ZM497.5 345.5H501.5V358.5H497.5ZM505.5 340.5H509.5V349.5H505.5ZM521.5 303.5H525.5V353.5H521.5ZM553.5 336.5H557.5V349.5H553.5ZM585.5 324.5H589.5V345.5H585.5ZM609.5 358.5H613.5V374.5H609.5ZM617.5 349.5H621.5V358.5H617.5ZM625.5 328.5H629.5V349.5H625.5ZM633.5 320.5H637.5V332.5H633.5ZM649.5 324.5H653.5V328.5H649.5ZM665.5 320.5H669.5V336.5H665.5ZM689.5 332.5H693.5V336.5H689.5ZM705.5 328.5H709.5V336.5H705.5ZM713.5 320.5H717.5V328.5H713.5ZM729.5 324.5H733.5V328.5H729.5ZM745.5 286.5H749.5V336.5H745.5ZM761.5 261.5H765.5V286.5H761.5ZM769.5 248.5H773.5V261.5H769.5ZM777.5 232.5H781.5V244.5H777.5ZM785.5 224.5H789.5V232.5H785.5ZM801.5 236.5H805.5V240.5H801.5ZM817.5 177.5H821.5V248.5H817.5ZM825.5 157.5H829.5V173.5H825.5ZM841.5 157.5H845.5V169.5H841.5ZM857.5 177.5H861.5V186.5H857.5ZM865.5 165.5H869.5V181.5H865.5ZM897.5 194.5H901.5V198.5H897.5ZM969.5 311.5H973.5V336.5H969.5ZM977.5 295.5H981.5V311.5H977.5ZM985.5 282.5H989.5V295.5H985.5ZM993.5 278.5H997.5V286.5H993.5ZM1017.5 273.5H1021.5V311.5H1017.5ZM1025.5 244.5H1029.5V273.5H1025.5ZM1049.5 236.5H1053.5V253.5H1049.5ZM1057.5 224.5H1061.5V236.5H1057.5ZM1065.5 211.5H1069.5V224.5H1065.5ZM1081.5 194.5H1085.5V219.5H1081.5ZM1097.5 190.5H1101.5V206.5H1097.5ZM1129.5 186.5H1133.5V206.5H1129.5ZM1153.5 194.5H1157.5V198.5H1153.5ZM1193.5 190.5H1197.5V206.5H1193.5ZM1217.5 194.5H1221.5V211.5H1217.5ZM1225.5 190.5H1229.5V194.5H1225.5ZM1241.5 194.5H1245.5V202.5H1241.5Z" stroke="#00ff00" stroke-width="1" fill="#000"/>
<path d="M337.5 265.5H341.5V291.5H337.5ZM361.5 253.5H365.5V282.5H361.5ZM369.5 282.5H373.5V295.5H369.5ZM377.5 291.5H381.5V299.5H377.5ZM385.5 295.5H389.5V299.5H385.5ZM393.5 299.5H397.5V307.5H393.5ZM417.5 282.5H421.5V291.5H417.5ZM425.5 295.5H429.5V311.5H425.5ZM433.5 311.5H437.5V328.5H433.5ZM457.5 311.5H461.5V332.5H457.5ZM465.5 332.5H469.5V362.5H465.5ZM473.5 362.5H477.5V366.5H473.5ZM513.5 340.5H517.5V358.5H513.5ZM529.5 303.5H533.5V320.5H529.5ZM545.5 320.5H549.5V349.5H545.5ZM561.5 336.5H565.5V340.5H561.5ZM593.5 328.5H597.5V349.5H593.5ZM601.5 345.5H605.5V374.5H601.5ZM641.5 324.5H645.5V328.5H641.5ZM657.5 324.5H661.5V336.5H657.5ZM673.5 320.5H677.5V332.5H673.5ZM681.5 328.5H685.5V336.5H681.5ZM721.5 320.5H725.5V332.5H721.5ZM737.5 328.5H741.5V336.5H737.5ZM753.5 286.5H757.5V291.5H753.5ZM793.5 228.5H797.5V240.5H793.5ZM809.5 236.5H813.5V248.5H809.5ZM833.5 161.5H837.5V165.5H833.5ZM849.5 157.5H853.5V190.5H849.5ZM873.5 165.5H877.5V169.5H873.5ZM881.5 169.5H885.5V198.5H881.5ZM889.5 194.5H893.5V198.5H889.5ZM905.5 198.5H909.5V202.5H905.5ZM913.5 202.5H917.5V215.5H913.5ZM921.5 215.5H925.5V236.5H921.5ZM929.5 236.5H933.5V253.5H929.5ZM937.5 253.5H941.5V286.5H937.5ZM945.5 286.5H949.5V295.5H945.5ZM953.5 291.5H957.5V311.5H953.5ZM961.5 311.5H965.5V336.5H961.5ZM1001.5 278.5H1005.5V282.5H1001.5ZM1009.5 286.5H1013.5V307.5H1009.5ZM1033.5 248.5H1037.5V257.5H1033.5ZM1073.5 211.5H1077.5V215.5H1073.5ZM1089.5 190.5H1093.5V206.5H1089.5ZM1105.5 190.5H1109.5V194.5H1105.5ZM1113.5 194.5H1117.5V202.5H1113.5ZM1121.5 202.5H1125.5V206.5H1121.5ZM1145.5 190.5H1149.5V198.5H1145.5ZM1169.5 194.5H1173.5V202.5H1169.5ZM1177.5 202.5H1181.5V211.5H1177.5ZM1201.5 190.5H1205.5V206.5H1201.5ZM1209.5 202.5H1213.5V215.5H1209.5ZM1233.5 190.5H1237.5V198.5H1233.5ZM1257.5 190.5H1261.5V198.5H1257.5Z" stroke="#00ff00" stroke-width="1" fill="#fff"/>
</g>
<path d="M299.5 119V438M299 119.5H1276M1275.5 119V438M299 437.5H1276" stroke="#fff" stroke-width="1" fill="none"/>
<path d="M1276 132.5H1280M1276 165.5H1280M1276 198.5H1280M1276 232.5H1280M1276 265.5H1280M1276 299.5H1280M1276 332.5H1280M1276 366.5H1280M1276 399.5H1280M363.5 438V441M427.5 438V441M491.5 438V441M555.5 438V441M619.5 438V441M683.5 438V441M747.5 438V441M811.5 438V441M875.5 438V441M939.5 438V441M1003.5 438V441M1067.5 438V441M1131.5 438V441M1195.5 438V441M1259.5 438V441" stroke="#fff" stroke-width="1" fill="none"/>
<rect x="1278" y="193" width="44" height="11" fill="#8796a6"/>
<g font-family="Liberation Sans, Arial, sans-serif" font-size="10" fill="#fff" stroke="#fff" stroke-width="0.2" text-rendering="geometricPrecision">
<text x="1281" y="136" textLength="37" lengthAdjust="spacingAndGlyphs">5061.500</text>
<text x="1281" y="169" textLength="37" lengthAdjust="spacingAndGlyphs">5057.500</text>
<text x="1281" y="202" fill="#000" stroke="#000" textLength="37" lengthAdjust="spacingAndGlyphs">5053.500</text>
<text x="1281" y="236" textLength="37" lengthAdjust="spacingAndGlyphs">5049.500</text>
<text x="1281" y="269" textLength="37" lengthAdjust="spacingAndGlyphs">5045.500</text>
<text x="1281" y="303" textLength="37" lengthAdjust="spacingAndGlyphs">5041.500</text>
<text x="1281" y="336" textLength="37" lengthAdjust="spacingAndGlyphs">5037.500</text>
<text x="1281" y="370" textLength="37" lengthAdjust="spacingAndGlyphs">5033.500</text>
<text x="1281" y="403" textLength="37" lengthAdjust="spacingAndGlyphs">5029.500</text>
<text x="299" y="450" textLength="43" lengthAdjust="spacingAndGlyphs">9 Jun 2021</text>
<text x="363" y="450" textLength="47" lengthAdjust="spacingAndGlyphs">9 Jun 09:11</text>
<text x="427" y="450" textLength="47" lengthAdjust="spacingAndGlyphs">9 Jun 09:19</text>
<text x="491" y="450" textLength="47" lengthAdjust="spacingAndGlyphs">9 Jun 09:27</text>
<text x="555" y="450" textLength="47" lengthAdjust="spacingAndGlyphs">9 Jun 09:35</text>
<text x="619" y="450" textLength="47" lengthAdjust="spacingAndGlyphs">9 Jun 09:43</text>
<text x="683" y="450" textLength="47" lengthAdjust="spacingAndGlyphs">9 Jun 09:51</text>
<text x="747" y="450" textLength="47" lengthAdjust="spacingAndGlyphs">9 Jun 09:59</text>
<text x="811" y="450" textLength="47" lengthAdjust="spacingAndGlyphs">9 Jun 10:07</text>
<text x="875" y="450" textLength="47" lengthAdjust="spacingAndGlyphs">9 Jun 10:15</text>
<text x="939" y="450" textLength="47" lengthAdjust="spacingAndGlyphs">9 Jun 10:23</text>
<text x="1003" y="450" textLength="47" lengthAdjust="spacingAndGlyphs">9 Jun 10:31</text>
<text x="1067" y="450" textLength="47" lengthAdjust="spacingAndGlyphs">9 Jun 10:39</text>
<text x="1131" y="450" textLength="47" lengthAdjust="spacingAndGlyphs">9 Jun 10:47</text>
<text x="1195" y="450" textLength="47" lengthAdjust="spacingAndGlyphs">9 Jun 10:55</text>
<text x="1259" y="450" textLength="47" lengthAdjust="spacingAndGlyphs">9 Jun 11:03</text>
<text x="341" y="133" textLength="126" lengthAdjust="spacingAndGlyphs" xml:space="preserve">WDON21, M1:  DOLAR MINI</text>
</g>
<g shape-rendering="auto"><rect x="303" y="123" width="14.5" height="11.7" rx="0.8" fill="#fff"/><rect x="303" y="123" width="14.5" height="2.6" fill="#8a8cf0"/><path d="M304.5 127.500h5M304.5 129.500h5M304.5 131.500h5M304.5 133.500h5" stroke="#e05050" stroke-width="1"/><path d="M310.700 127.500h5.500M310.700 129.500h5.500M310.700 131.500h5.500M310.700 133.500h5.500" stroke="#5858f0" stroke-width="1"/><path d="M320.200 124.300h4.800v5h2v5.400h-6.800z" fill="#2828e0"/><path d="M335.200 124.300h-4.500v5h-2.700v5.400h7.200z" fill="#d03030"/><rect x="325" y="123.800" width="7" height="2.700" fill="#c8c8c8"/><rect x="321" y="132.700" width="5.500" height="1" fill="#8080ff"/><rect x="329" y="132.700" width="5" height="1" fill="#ff8080"/></g>
</svg>
<div style="position:absolute;left:297px;top:458px;width:1037px;height:2.5px;background:#fff;"></div>
<div style="position:absolute;left:297px;top:460.3px;width:1037px;height:1.2px;background:#000;"></div>
<div style="position:absolute;left:297px;top:461.5px;width:1037px;height:18px;background:#f0f0f0;"></div>
<div style="position:absolute;left:302px;top:458px;width:93px;height:21px;background:#fff;border:1.5px solid #000;border-top:none;box-sizing:border-box;border-radius:0 0 1.5px 1.5px;"></div>
<span id="t78" style="position:absolute;top:461.5px;line-height:16px;font-size:12px;color:#000;white-space:pre;left:313.00px;transform-origin:0 50%;transform:scaleX(0.9516);">WDON21,M1</span>
<svg width="6" height="9" viewBox="0 0 6 9" style="position:absolute;left:1318px;top:465px;"><path d="M0.5 0.5l4.5 4-4.5 4z" fill="#909090"/></svg>
<div style="position:absolute;left:297px;top:479.5px;width:1037px;height:1px;background:#dcdcdc;"></div>
<div style="position:absolute;left:10px;top:481px;width:1325px;height:1px;background:#fff;"></div>
<div style="position:absolute;left:25px;top:484px;width:1307px;height:189.5px;background:#fff;border:1px solid #c8c8c8;box-sizing:border-box;"></div>
<svg width="6.5" height="6.5" viewBox="0 0 7 7" style="position:absolute;left:14px;top:486px;"><path d="M0.8 0.8l5.4 5.4M6.2 0.8l-5.4 5.4" stroke="#000" stroke-width="1.9"/></svg>
<div style="position:absolute;left:12px;top:497px;width:11.8px;height:198.4px;background:linear-gradient(0deg,#bccde4,#d3deec 50%,#eceff3);"></div>
<span id="vt" style="position:absolute;left:18.2px;top:639.3px;font-size:11.3px;line-height:14px;white-space:pre;transform:translate(-50%,-50%) rotate(-90deg) scaleX(0.9589);color:#000">Caixa de Ferramentas</span>
<div style="position:absolute;left:155px;top:485px;width:1px;height:18px;background:#d8d8d8;"></div>
<div style="position:absolute;left:245px;top:485px;width:1px;height:18px;background:#d8d8d8;"></div>
<div style="position:absolute;left:385px;top:485px;width:1px;height:18px;background:#d8d8d8;"></div>
<div style="position:absolute;left:485px;top:485px;width:1px;height:18px;background:#d8d8d8;"></div>
<div style="position:absolute;left:585px;top:485px;width:1px;height:18px;background:#d8d8d8;"></div>
<div style="position:absolute;left:685px;top:485px;width:1px;height:18px;background:#d8d8d8;"></div>
<div style="position:absolute;left:785px;top:485px;width:1px;height:18px;background:#d8d8d8;"></div>
<div style="position:absolute;left:885px;top:485px;width:1px;height:18px;background:#d8d8d8;"></div>
<div style="position:absolute;left:985px;top:485px;width:1px;height:18px;background:#d8d8d8;"></div>
<div style="position:absolute;left:1095px;top:485px;width:1px;height:18px;background:#d8d8d8;"></div>
<div style="position:absolute;left:27px;top:503px;width:1304px;height:1px;background:#e0e0e0;"></div>
<span id="t79" style="position:absolute;top:487.0px;line-height:16px;font-size:12px;color:#000;white-space:pre;left:32.00px;transform-origin:0 50%;transform:scaleX(0.9999);">Ativo</span>
<svg width="8" height="5" viewBox="0 0 8 5" style="position:absolute;left:73px;top:492px;"><path d="M0 5h8l-4-5z" fill="#303030"/></svg>
<span id="t80" style="position:absolute;top:487.0px;line-height:16px;font-size:12px;color:#000;white-space:pre;left:162.00px;transform-origin:0 50%;transform:scaleX(0.9860);">Bilhete</span>
<span id="t81" style="position:absolute;top:487.0px;line-height:16px;font-size:12px;color:#000;white-space:pre;right:970.31px;transform-origin:100% 50%;transform:scaleX(0.9500);">Horário</span>
<span id="t82" style="position:absolute;top:487.0px;line-height:16px;font-size:12px;color:#000;white-space:pre;right:870.31px;transform-origin:100% 50%;transform:scaleX(0.9500);">Tipo</span>
<span id="t83" style="position:absolute;top:487.0px;line-height:16px;font-size:12px;color:#000;white-space:pre;right:770.31px;transform-origin:100% 50%;transform:scaleX(0.9500);">Volume</span>
<span id="t84" style="position:absolute;top:487.0px;line-height:16px;font-size:12px;color:#000;white-space:pre;right:670.31px;transform-origin:100% 50%;transform:scaleX(0.9500);">Preço</span>
<span id="t85" style="position:absolute;top:487.0px;line-height:16px;font-size:12px;color:#000;white-space:pre;right:570.31px;transform-origin:100% 50%;transform:scaleX(0.9500);">S / L</span>
<span id="t86" style="position:absolute;top:487.0px;line-height:16px;font-size:12px;color:#000;white-space:pre;right:470.00px;transform-origin:100% 50%;transform:scaleX(0.9500);">T / P</span>
<span id="t87" style="position:absolute;top:487.0px;line-height:16px;font-size:12px;color:#000;white-space:pre;right:370.31px;transform-origin:100% 50%;transform:scaleX(0.9500);">Preço</span>
<span id="t88" style="position:absolute;top:487.0px;line-height:16px;font-size:12px;color:#000;white-space:pre;right:260.31px;transform-origin:100% 50%;transform:scaleX(0.9500);">Lucro</span>
<span id="t89" style="position:absolute;top:487.0px;line-height:16px;font-size:12px;color:#000;white-space:pre;right:26.12px;transform-origin:100% 50%;transform:scaleX(0.9815);">Comentário</span>
<div style="position:absolute;left:27px;top:523px;width:1304px;height:1px;background:#e0e0e0;"></div>
<div style="position:absolute;left:155px;top:504px;width:1px;height:19px;background:#e0e0e0;"></div>
<div style="position:absolute;left:245px;top:504px;width:1px;height:19px;background:#e0e0e0;"></div>
<div style="position:absolute;left:385px;top:504px;width:1px;height:19px;background:#e0e0e0;"></div>
<div style="position:absolute;left:485px;top:504px;width:1px;height:19px;background:#e0e0e0;"></div>
<div style="position:absolute;left:585px;top:504px;width:1px;height:19px;background:#e0e0e0;"></div>
<div style="position:absolute;left:685px;top:504px;width:1px;height:19px;background:#e0e0e0;"></div>
<div style="position:absolute;left:785px;top:504px;width:1px;height:19px;background:#e0e0e0;"></div>
<div style="position:absolute;left:885px;top:504px;width:1px;height:19px;background:#e0e0e0;"></div>
<div style="position:absolute;left:985px;top:504px;width:1px;height:19px;background:#e0e0e0;"></div>
<div style="position:absolute;left:1095px;top:504px;width:1px;height:19px;background:#e0e0e0;"></div>
<svg width="13" height="16" viewBox="0 0 13 16" style="position:absolute;left:28px;top:505px;"><path d="M1.5 1.5h8a2 2 0 0 1 2 2v8l-3 3h-7z" fill="#fff" stroke="#f07030" stroke-width="1.6"/><path d="M3.5 5h5M3.5 8h5M3.5 11h3" stroke="#f07030" stroke-width="1.3"/></svg>
<span id="t90" style="position:absolute;top:505.5px;line-height:16px;font-size:12px;color:#000;white-space:pre;left:48.05px;transform-origin:0 50%;transform:scaleX(0.9537);">winm21</span>
<span id="t91" style="position:absolute;top:505.5px;line-height:16px;font-size:12px;color:#000;white-space:pre;left:159.00px;transform-origin:0 50%;transform:scaleX(0.9107);">772059167</span>
<span id="t92" style="position:absolute;top:505.5px;line-height:16px;font-size:12px;color:#000;white-space:pre;right:967.79px;transform-origin:100% 50%;transform:scaleX(0.9010);">2021.06.09 09:10:00</span>
<span id="t93" style="position:absolute;top:505.5px;line-height:16px;font-size:12px;color:#000;white-space:pre;right:867.87px;transform-origin:100% 50%;transform:scaleX(0.9516);">sell</span>
<span id="t94" style="position:absolute;top:505.5px;line-height:16px;font-size:12px;color:#000;white-space:pre;right:768.32px;transform-origin:100% 50%;transform:scaleX(0.9700);">1</span>
<span id="t95" style="position:absolute;top:505.5px;line-height:16px;font-size:12px;color:#000;white-space:pre;right:668.78px;transform-origin:100% 50%;transform:scaleX(0.8670);">129865</span>
<span id="t96" style="position:absolute;top:505.5px;line-height:16px;font-size:12px;color:#000;white-space:pre;right:368.78px;transform-origin:100% 50%;transform:scaleX(0.8670);">130125</span>
<span id="t97" style="position:absolute;top:505.5px;line-height:16px;font-size:12px;color:#f01818;white-space:pre;right:276.30px;transform-origin:100% 50%;transform:scaleX(0.9170);">-52.00</span>
<span id="t98" style="position:absolute;top:505.5px;line-height:16px;font-size:12px;color:#000;white-space:pre;right:22.80px;transform-origin:100% 50%;transform:scaleX(0.8974);">CANDLE_PATTERN_DARK_CLOUD_COVER</span>
<svg width="8" height="8" viewBox="0 0 8 8" style="position:absolute;left:1083px;top:510px;"><path d="M1 1l6 6M7 1l-6 6" stroke="#8a8a8a" stroke-width="1.6"/></svg>
<div style="position:absolute;left:26px;top:524px;width:1305px;height:20px;background:#cacaca;"></div>
<svg width="13" height="13" viewBox="0 0 13 13" style="position:absolute;left:28px;top:527px;"><circle cx="6.5" cy="6.5" r="5" fill="none" stroke="#202020" stroke-width="1.2"/><path d="M3.8 6.5h5.4" stroke="#202020" stroke-width="1.3"/></svg>
<span id="t99" style="position:absolute;top:526.0px;line-height:16px;font-size:12px;color:#000;white-space:pre;font-weight:bold;left:47.30px;transform-origin:0 50%;transform:scaleX(0.9555);">Saldo: 9 999 220.00 BRL</span>
<span id="t100" style="position:absolute;top:526.0px;line-height:16px;font-size:12px;color:#000;white-space:pre;font-weight:bold;left:186.20px;transform-origin:0 50%;transform:scaleX(0.9557);">Capital Líquido: 9 999 168.00</span>
<span id="t101" style="position:absolute;top:526.0px;line-height:16px;font-size:12px;color:#000;white-space:pre;font-weight:bold;left:351.10px;transform-origin:0 50%;transform:scaleX(0.9913);">Margem Livre: 9 999 168.00</span>
<span id="t102" style="position:absolute;top:526.0px;line-height:16px;font-size:12px;color:#000;white-space:pre;font-weight:bold;right:276.32px;transform-origin:100% 50%;transform:scaleX(0.9700);">-52.00</span>
<div style="position:absolute;left:110px;top:673px;width:1222px;height:1.4px;background:#000;"></div>
<div style="position:absolute;left:28px;top:672.5px;width:83px;height:20.4px;background:#fff;border:1.5px solid #000;border-top:none;box-sizing:border-box;border-radius:0 0 1.5px 1.5px;"></div>
<span id="t103" style="position:absolute;top:674.9px;line-height:16px;font-size:12px;color:#000;white-space:pre;left:38.00px;transform-origin:0 50%;transform:scaleX(0.9811);">Negociação</span>
<span id="t104" style="position:absolute;top:675.0px;line-height:16px;font-size:12px;color:#7c7c7c;white-space:pre;left:121.00px;transform-origin:0 50%;transform:scaleX(0.9337);">Exposição</span>
<span id="t105" style="position:absolute;top:675.0px;line-height:16px;font-size:12px;color:#7c7c7c;white-space:pre;left:193.00px;transform-origin:0 50%;transform:scaleX(1.0106);">Histórico</span>
<span id="t106" style="position:absolute;top:675.0px;line-height:16px;font-size:12px;color:#7c7c7c;white-space:pre;left:261.00px;transform-origin:0 50%;transform:scaleX(0.9804);">Notícias</span>
<span id="t107" style="position:absolute;top:675.0px;line-height:16px;font-size:12px;color:#7c7c7c;white-space:pre;left:336.00px;transform-origin:0 50%;transform:scaleX(0.9580);">Caixa de E-mail</span>
<span id="t108" style="position:absolute;top:675.0px;line-height:16px;font-size:12px;color:#7c7c7c;white-space:pre;left:444.00px;transform-origin:0 50%;transform:scaleX(0.9681);">Calendário</span>
<span id="t109" style="position:absolute;top:675.0px;line-height:16px;font-size:12px;color:#7c7c7c;white-space:pre;left:521.00px;transform-origin:0 50%;transform:scaleX(0.9205);">Empresa</span>
<span id="t110" style="position:absolute;top:675.0px;line-height:16px;font-size:12px;color:#7c7c7c;white-space:pre;left:586.00px;transform-origin:0 50%;transform:scaleX(0.9639);">Alertas</span>
<span id="t111" style="position:absolute;top:675.0px;line-height:16px;font-size:12px;color:#7c7c7c;white-space:pre;left:642.00px;transform-origin:0 50%;transform:scaleX(1.0175);">Artigos</span>
<span id="t112" style="position:absolute;top:675.0px;line-height:16px;font-size:12px;color:#7c7c7c;white-space:pre;left:707.00px;transform-origin:0 50%;transform:scaleX(0.9932);">Biblioteca</span>
<span id="t113" style="position:absolute;top:675.0px;line-height:16px;font-size:12px;color:#7c7c7c;white-space:pre;left:779.00px;transform-origin:0 50%;transform:scaleX(0.9095);">Experts</span>
<span id="t114" style="position:absolute;top:675.0px;line-height:16px;font-size:12px;color:#7c7c7c;white-space:pre;left:836.00px;transform-origin:0 50%;transform:scaleX(0.9631);">Diário</span>
<div style="position:absolute;left:183px;top:677px;width:1px;height:14px;background:#7c7c7c;"></div>
<div style="position:absolute;left:251px;top:677px;width:1px;height:14px;background:#7c7c7c;"></div>
<div style="position:absolute;left:326px;top:677px;width:1px;height:14px;background:#7c7c7c;"></div>
<div style="position:absolute;left:434px;top:677px;width:1px;height:14px;background:#7c7c7c;"></div>
<div style="position:absolute;left:511px;top:677px;width:1px;height:14px;background:#7c7c7c;"></div>
<div style="position:absolute;left:576px;top:677px;width:1px;height:14px;background:#7c7c7c;"></div>
<div style="position:absolute;left:632px;top:677px;width:1px;height:14px;background:#7c7c7c;"></div>
<div style="position:absolute;left:697px;top:677px;width:1px;height:14px;background:#7c7c7c;"></div>
<div style="position:absolute;left:769px;top:677px;width:1px;height:14px;background:#7c7c7c;"></div>
<div style="position:absolute;left:826px;top:677px;width:1px;height:14px;background:#7c7c7c;"></div>
<span id="t115" style="position:absolute;top:681.0px;line-height:13px;font-size:9px;color:#f01818;white-space:pre;font-weight:bold;left:305.50px;transform-origin:0 50%;transform:scaleX(1.0494);">99</span>
<span id="t116" style="position:absolute;top:681.0px;line-height:13px;font-size:9px;color:#f01818;white-space:pre;font-weight:bold;left:419.00px;transform-origin:0 50%;transform:scaleX(0.9000);">6</span>
<span id="t117" style="position:absolute;top:681.0px;line-height:13px;font-size:9px;color:#f01818;white-space:pre;font-weight:bold;left:682.00px;transform-origin:0 50%;transform:scaleX(0.9000);">3</span>
<span id="t118" style="position:absolute;top:677.5px;line-height:16px;font-size:12px;color:#000;white-space:pre;left:1013.00px;transform-origin:0 50%;transform:scaleX(0.9997);">Mercado</span>
<span id="t119" style="position:absolute;top:677.5px;line-height:16px;font-size:12px;color:#000;white-space:pre;left:1092.00px;transform-origin:0 50%;transform:scaleX(0.9179);">Sinais</span>
<span id="t120" style="position:absolute;top:677.5px;line-height:16px;font-size:12px;color:#000;white-space:pre;left:1154.00px;transform-origin:0 50%;transform:scaleX(0.8331);">VPS</span>
<span id="t121" style="position:absolute;top:677.5px;line-height:16px;font-size:12px;color:#000;white-space:pre;left:1207.00px;transform-origin:0 50%;transform:scaleX(0.9552);">Testador de Estratégia</span>
<svg width="13" height="16" viewBox="0 0 13 16" style="position:absolute;left:996px;top:677px;"><path d="M4 6v-2.500a2.500 2.500 0 0 1 5 0v2.500" fill="none" stroke="#808080" stroke-width="1.3"/><rect x="0.75" y="5.750" width="11.500" height="9.500" fill="#f8c818" stroke="#d8a010" stroke-width="1.5"/><path d="M3 13v-3l1.700-1 1.800 1.500 1.800-1.500 1.700 1v3z" fill="#2868d0"/></svg>
<svg width="16" height="16" viewBox="0 0 16 16" style="position:absolute;left:1075px;top:677px;"><path d="M5 8a3.500 3.500 0 1 1 6.500 1.500" fill="none" stroke="#4a90e8" stroke-width="1.3"/><path d="M2.500 9a6.300 6.300 0 1 1 11.500 2" fill="none" stroke="#4a90e8" stroke-width="1.3"/><rect x="3" y="9" width="3" height="5" fill="#18a818"/><path d="M4.500 7v9M9 5v10" stroke="#18a818" stroke-width="1.2"/><rect x="7.500" y="7" width="3" height="6" fill="#18a818"/></svg>
<svg width="17" height="16" viewBox="0 0 17 16" style="position:absolute;left:1136px;top:677px;"><path d="M3.500 9a2.800 2.800 0 0 1 0-5.500 4.500 4.500 0 0 1 8.800-.5 3 3 0 0 1 1 6" fill="#fff" stroke="#4a90e8" stroke-width="1.3"/><rect x="4" y="5" width="9" height="3.500" fill="#404850"/><rect x="4" y="9.500" width="9" height="3.500" fill="#404850"/><path d="M8.500 13v2M5 15.500h7" stroke="#404850" stroke-width="1.3"/></svg>
<svg width="17" height="14" viewBox="0 0 17 14" style="position:absolute;left:1188px;top:678px;"><rect x="0.75" y="0.75" width="15.500" height="12.500" fill="#183878" stroke="#4a90e8" stroke-width="1.5"/><rect x="0.75" y="0.75" width="15.500" height="2.500" fill="#4a90e8"/><path d="M2.500 10l3-3 3 1.500 3-3 3 1" stroke="#40e040" stroke-width="1.4" fill="none"/><path d="M2.500 12h12" stroke="#f0f0f0" stroke-width="1"/></svg>
<svg width="16" height="18" viewBox="0 0 16 18" style="position:absolute;left:1222px;top:703px;"><path d="M1 3l5-2 6 2v12l-6 2-5-2z" fill="#4aa0e8" stroke="#2878c8"/><path d="M6 1v16" stroke="#2878c8"/><path d="M7.500 5h3M7.500 7.500h3" stroke="#fff" stroke-width="1.2"/><circle cx="11.500" cy="13.500" r="4" fill="#48b018" stroke="#fff" stroke-width="0.8"/><path d="M9.500 12.500l2 2 2-2" stroke="#fff" stroke-width="1.4" fill="none"/></svg>
<div style="position:absolute;left:10px;top:697px;width:1325px;height:1px;background:#fff;"></div>
<div style="position:absolute;left:10px;top:698px;width:1325px;height:1px;background:#b8b8b8;"></div>
<span id="t122" style="position:absolute;top:703.5px;line-height:16px;font-size:12px;color:#000;white-space:pre;left:12.00px;transform-origin:0 50%;transform:scaleX(0.9430);">Para Ajuda, pressione F1</span>
<span id="t123" style="position:absolute;top:703.5px;line-height:16px;font-size:12px;color:#000;white-space:pre;left:648.00px;transform-origin:0 50%;transform:scaleX(0.8878);">PERFIL PRINCIPAL</span>
<div style="position:absolute;left:643px;top:703px;width:1px;height:18px;background:#a8a8a8;"></div>
<div style="position:absolute;left:770px;top:703px;width:1px;height:18px;background:#a8a8a8;"></div>
<div style="position:absolute;left:868px;top:703px;width:1px;height:18px;background:#a8a8a8;"></div>
<div style="position:absolute;left:939px;top:703px;width:1px;height:18px;background:#a8a8a8;"></div>
<div style="position:absolute;left:1010px;top:703px;width:1px;height:18px;background:#a8a8a8;"></div>
<div style="position:absolute;left:1078px;top:703px;width:1px;height:18px;background:#a8a8a8;"></div>
<div style="position:absolute;left:1148px;top:703px;width:1px;height:18px;background:#a8a8a8;"></div>
<div style="position:absolute;left:1214px;top:703px;width:1px;height:18px;background:#a8a8a8;"></div>
<span id="t124" style="position:absolute;top:703.5px;line-height:16px;font-size:12px;color:#000;white-space:pre;left:1240.00px;transform-origin:0 50%;transform:scaleX(0.9820);">140 / 0 Mb</span>
<svg width="10" height="8" viewBox="0 0 10 8" style="position:absolute;left:1324px;top:711px;"><rect x="8" y="0" width="1.5" height="1.5" fill="#b0b0b0"/><rect x="5" y="3" width="1.5" height="1.5" fill="#b0b0b0"/><rect x="8" y="3" width="1.5" height="1.5" fill="#b0b0b0"/><rect x="2" y="6" width="1.5" height="1.5" fill="#b0b0b0"/><rect x="5" y="6" width="1.5" height="1.5" fill="#b0b0b0"/><rect x="8" y="6" width="1.5" height="1.5" fill="#b0b0b0"/></svg>
<div style="position:absolute;left:1316px;top:31px;width:40px;height:19px;background:#ffffe1;border:1px solid #767676;box-sizing:border-box;"></div>
<span id="t125" style="position:absolute;top:32.5px;line-height:16px;font-size:12px;color:#000;white-space:pre;left:1319.50px;transform-origin:0 50%;transform:scaleX(0.9676);">Close</span>
<svg width="1350" height="100" viewBox="0 0 1350 100" style="position:absolute;left:0;top:0"><path d="M1115 22.5H1178.5V7L1240 39.3L1178.5 71.6V55.8H1115Z" fill="none" stroke="#ed1c24" stroke-width="4.6" stroke-linejoin="miter" stroke-miterlimit="10"/><rect x="1280.7" y="0.5" width="68" height="58.7" fill="none" stroke="#ed1c24" stroke-width="5"/></svg>
</div></body></html>
